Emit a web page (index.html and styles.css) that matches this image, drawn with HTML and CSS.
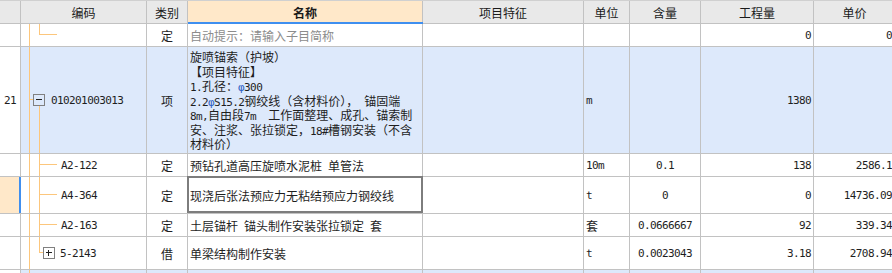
FILE: index.html
```html
<!DOCTYPE html>
<html lang="zh-CN">
<head>
<meta charset="utf-8">
<title>清单</title>
<link rel="stylesheet" href="styles.css">
</head>
<body>
<div class="grid">
  <!-- header -->
  <div class="c h"></div>
  <div class="c h">编码</div>
  <div class="c h">类别</div>
  <div class="c h hn">名称</div>
  <div class="c h">项目特征</div>
  <div class="c h">单位</div>
  <div class="c h">含量</div>
  <div class="c h">工程量</div>
  <div class="c h">单价</div>

  <!-- row 1 -->
  <div class="c rn"></div>
  <div class="c code"><i class="v0"></i><i class="v1 up"></i><i class="hz"></i></div>
  <div class="c ctr">定</div>
  <div class="c name hint">自动提示：请输入子目简称</div>
  <div class="c"></div>
  <div class="c unit"></div>
  <div class="c ctr"></div>
  <div class="c qty"><span class="m">0</span></div>
  <div class="c price"><span class="m">0</span></div>

  <!-- row 2 -->
  <div class="c rn"><span class="m">21</span></div>
  <div class="c code sel lv0"><i class="v0"></i><i class="hz0"></i><i class="v1 down"></i><span class="box"></span><span class="m">010201003013</span></div>
  <div class="c ctr sel">项</div>
  <div class="c name sel multi">
    <div class="ln">旋喷锚索（护坡）</div>
    <div class="ln">【项目特征】</div>
    <div class="ln"><span class="m">1.</span>孔径：<span class="m"><span class="phi">φ</span>300</span></div>
    <div class="ln"><span class="m">2.2<span class="phi">φ</span>S15.2</span>钢绞线（含材料价），<span class="m"> </span>锚固端</div>
    <div class="ln"><span class="m">8m,</span>自由段<span class="m">7m  </span>工作面整理、成孔、锚索制</div>
    <div class="ln">安、注浆、张拉锁定，<span class="m">18#</span>槽钢安装（不含</div>
    <div class="ln">材料价）</div>
  </div>
  <div class="c sel"></div>
  <div class="c unit sel"><span class="m">m</span></div>
  <div class="c ctr sel"></div>
  <div class="c qty sel"><span class="m">1380</span></div>
  <div class="c price sel"></div>

  <!-- row 3 -->
  <div class="c rn"></div>
  <div class="c code lv1"><i class="v0"></i><i class="v1"></i><i class="hz"></i><span class="m">A2-122</span></div>
  <div class="c ctr">定</div>
  <div class="c name">预钻孔道高压旋喷水泥桩<span class="m"> </span>单管法</div>
  <div class="c"></div>
  <div class="c unit"><span class="m">10m</span></div>
  <div class="c ctr"><span class="m">0.1</span></div>
  <div class="c qty"><span class="m">138</span></div>
  <div class="c price"><span class="m">2586.1</span></div>

  <!-- row 4 -->
  <div class="c rn cur"><i class="bar"></i></div>
  <div class="c code lv1"><i class="v0"></i><i class="v1"></i><i class="hz"></i><span class="m">A4-364</span></div>
  <div class="c ctr">定</div>
  <div class="c name focus">现浇后张法预应力无粘结预应力钢绞线<i class="fb"></i></div>
  <div class="c"></div>
  <div class="c unit"><span class="m">t</span></div>
  <div class="c ctr"><span class="m">0</span></div>
  <div class="c qty"><span class="m">0</span></div>
  <div class="c price"><span class="m">14736.09</span></div>

  <!-- row 5 -->
  <div class="c rn"></div>
  <div class="c code lv1"><i class="v0"></i><i class="v1"></i><i class="hz"></i><span class="m">A2-163</span></div>
  <div class="c ctr">定</div>
  <div class="c name">土层锚杆<span class="m"> </span>锚头制作安装张拉锁定<span class="m"> </span>套</div>
  <div class="c"></div>
  <div class="c unit">套</div>
  <div class="c ctr"><span class="m">0.0666667</span></div>
  <div class="c qty"><span class="m">92</span></div>
  <div class="c price"><span class="m">339.34</span></div>

  <!-- row 6 -->
  <div class="c rn"></div>
  <div class="c code lv1b"><i class="v0"></i><i class="v1 up"></i><i class="hz short"></i><span class="box plus"></span><span class="m">5-2143</span></div>
  <div class="c ctr">借</div>
  <div class="c name">单梁结构制作安装</div>
  <div class="c"></div>
  <div class="c unit"><span class="m">t</span></div>
  <div class="c ctr"><span class="m">0.0023043</span></div>
  <div class="c qty"><span class="m">3.18</span></div>
  <div class="c price"><span class="m">2708.94</span></div>

  <!-- row 7 (partially visible) -->
  <div class="c rn"></div>
  <div class="c code sel"><i class="v0"></i></div>
  <div class="c sel"></div>
  <div class="c sel"></div>
  <div class="c sel"></div>
  <div class="c sel"></div>
  <div class="c sel"></div>
  <div class="c sel"></div>
  <div class="c sel"></div>
</div>
</body>
</html>
```

FILE: styles.css
```css
html, body {
  margin: 0;
  padding: 0;
}

body {
  width: 892px;
  height: 273px;
  overflow: hidden;
  background: #ffffff;
  font-family: "Noto Sans CJK SC", "Noto Sans", sans-serif;
  font-size: 12px;
  color: #1e1e1e;
}

.grid {
  display: grid;
  width: 895px;
  grid-template-columns: 20px 125px 40px 234px 160px 45px 70px 112px 81px;
  grid-template-rows: 22px 22px 106px 22px 36px 22px 32px 3px;
  gap: 1px;
  background: #c2c2c2;
  border-top: 1px solid #d0d0d0;
}

.c {
  background: #ffffff;
  display: flex;
  align-items: center;
  white-space: nowrap;
  min-width: 0;
  position: relative;
}

.m {
  font-family: "DejaVu Sans Mono", monospace;
  font-size: 11px;
  letter-spacing: -0.6px;
  white-space: pre;
}

/* header */
.h {
  background: #e9e9e9;
  justify-content: center;
  color: #1a1a1a;
}

.hn {
  background: #ffe8c9;
  font-weight: bold;
}

.hn::after {
  content: "";
  position: absolute;
  left: 0;
  right: -1px;
  bottom: -1px;
  height: 2px;
  background: #3f8ff0;
}

/* row number column */
.rn {
  justify-content: center;
}

.rn.cur {
  background: #ffe8c9;
}

.bar {
  position: absolute;
  top: 0;
  bottom: 0;
  right: -1px;
  width: 2px;
  background: #3f8ff0;
}

/* selected row */
.sel {
  background: #dde9fb;
}

.ctr {
  justify-content: center;
}

.unit {
  padding-left: 2px;
}

.qty {
  justify-content: flex-end;
  padding-right: 2px;
}

.price {
  justify-content: flex-end;
  padding-right: 3px;
}

/* name column */
.name {
  padding-left: 2px;
}

.hint {
  color: #8c8c8c;
}

.multi {
  flex-direction: column;
  align-items: flex-start;
  justify-content: flex-start;
  padding-top: 3px;
  line-height: 14.5px;
}

.ln {
  white-space: pre;
  height: 14.5px;
}

.phi {
  color: #2f63c4;
}

.focus .fb {
  position: absolute;
  top: -1px;
  left: -1px;
  right: -1px;
  bottom: 0;
  border: 2px solid #7d7d7d;
}

/* tree column */
.code i {
  position: absolute;
  background: #fcc67c;
}

.code .v0 {
  left: 8px;
  top: 0;
  bottom: 0;
  width: 1px;
}

.code .v1 {
  left: 18px;
  top: 0;
  bottom: 0;
  width: 1px;
}

.code .v1.up {
  bottom: auto;
  height: 50%;
}

.code .v1.down {
  top: calc(50% + 6px);
}

.code .hz {
  left: 18px;
  width: 18px;
  height: 1px;
  top: calc(50% - 1px);
}

.code .hz.short {
  width: 4px;
}

.code .hz0 {
  left: 8px;
  width: 4px;
  height: 1px;
  top: calc(50% - 1px);
}

.lv0 {
  padding-left: 12px;
}

.lv1 {
  padding-left: 40px;
}

.lv1b {
  padding-left: 22px;
}

.box {
  position: relative;
  flex: none;
  width: 10px;
  height: 10px;
  border: 1px solid #808080;
  margin-right: 6px;
}

.lv1b .box {
  margin-right: 5px;
}

.box::before {
  content: "";
  position: absolute;
  left: 2px;
  right: 2px;
  top: 4px;
  height: 1px;
  background: #222222;
}

.box.plus::after {
  content: "";
  position: absolute;
  top: 2px;
  bottom: 2px;
  left: 4px;
  width: 1px;
  background: #222222;
}
```
